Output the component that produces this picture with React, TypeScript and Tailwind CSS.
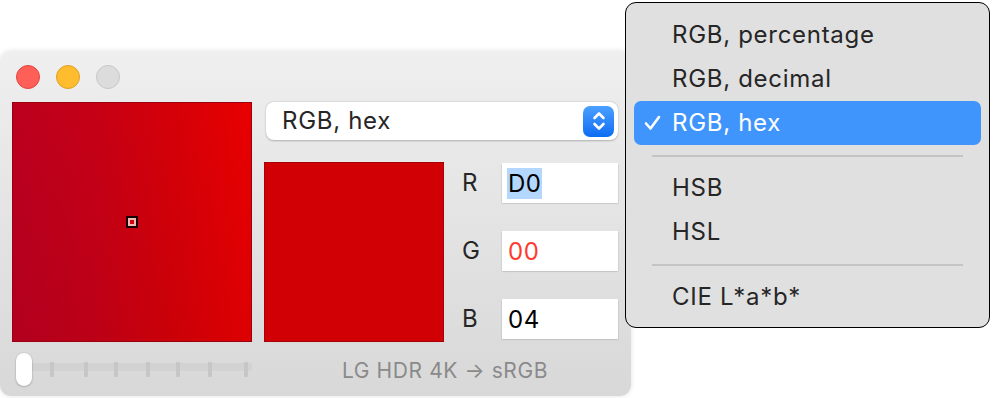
import React from "react";

const menuItems = [
  { label: "RGB, percentage" },
  { label: "RGB, decimal" },
  { label: "RGB, hex", selected: true },
  { sep: true },
  { label: "HSB" },
  { label: "HSL" },
  { sep: true },
  { label: "CIE L*a*b*" },
];

const channels = [
  { name: "R", value: "D0", selected: true },
  { name: "G", value: "00", red: true },
  { name: "B", value: "04" },
];

function Stepper() {
  return (
    <div className="w-[31px] h-[31px] rounded-[7px] bg-linear-to-b from-[#4aa0ff] to-[#0b6cf2] flex items-center justify-center">
      <svg width="16" height="22" viewBox="0 0 16 22" fill="none" stroke="white" strokeWidth="2.6" strokeLinecap="round" strokeLinejoin="round">
        <path d="M3.5 8 L8 3.5 L12.5 8" />
        <path d="M3.5 14 L8 18.5 L12.5 14" />
      </svg>
    </div>
  );
}

function Slider() {
  const ticks = [52, 86, 116, 148, 178, 210, 246];
  return (
    <div className="relative w-[236px] h-[33px]">
      <div className="absolute left-[4px] right-0 top-[10px] h-[8px] bg-[#d2d2d2] rounded-[2px]" />
      {ticks.map((x) => (
        <div key={x} className="absolute top-[9px] w-[4px] h-[15px] bg-[#c6c6c6] rounded-[1px]" style={{ left: x - 16 - 2 }} />
      ))}
      <div className="absolute left-0 top-0 w-[16px] h-[33px] rounded-full bg-white shadow-[0_0.5px_2px_rgba(0,0,0,0.35)]" />
    </div>
  );
}

export default function App() {
  return (
    <div className="relative w-[994px] h-[398px] bg-white overflow-hidden font-['Inter',sans-serif] text-[#262626]">
      {/* window */}
      <div className="absolute left-0 top-[51px] w-[631px] h-[345px] rounded-[11px] bg-linear-to-b from-[#efefef] to-[#d8d8d8] shadow-[0_0_5px_rgba(0,0,0,0.12)] flex flex-col">
        <div className="h-[51px] pt-[14px] pl-[16px] flex gap-[16px]">
          <div className="w-[24px] h-[24px] rounded-full bg-[#fe5f57] border border-[#e2463f]" />
          <div className="w-[24px] h-[24px] rounded-full bg-[#febc2e] border border-[#e0a024]" />
          <div className="w-[24px] h-[24px] rounded-full bg-[#dcdcdc] border border-[#c8c8c8]" />
        </div>
        <div className="flex pl-[12px]">
          <div className="relative w-[240px] h-[240px] border border-[#9a0010] bg-[linear-gradient(90deg,#b9001f_0%,#c40016_35%,#d20008_65%,#e70000_100%)]">
            <div className="absolute inset-0 bg-linear-to-b from-[rgba(255,0,0,0.04)] to-[rgba(60,0,20,0.06)]" />
            <div className="absolute left-[113px] top-[113px] w-[12px] h-[12px] bg-[#1a0000] p-[2px]">
              <div className="w-full h-full bg-[#f2b8b8] p-[2px]">
                <div className="w-full h-full bg-[#d40010]" />
              </div>
            </div>
          </div>
          <div className="ml-[14px] w-[352px] flex flex-col">
            <div className="h-[38px] rounded-[8px] bg-white shadow-[0_0.5px_2px_rgba(0,0,0,0.25)] flex items-center justify-between pl-[16px] pr-[4px]">
              <span className="text-[24px] tracking-[0.7px]">RGB, hex</span>
              <Stepper />
            </div>
            <div className="mt-[22px] flex -ml-[2px]">
              <div className="w-[180px] h-[180px] bg-[#d00004] border border-[#a60008]" />
              <div className="flex flex-col gap-[28px] pt-[1px]">
                {channels.map((c) => (
                  <div key={c.name} className="flex items-center h-[40px]">
                    <span className="w-[58px] pl-[18px] text-[24px]">{c.name}</span>
                    <div className="w-[116px] h-[40px] bg-white shadow-[0_0.5px_1.5px_rgba(0,0,0,0.3)] flex items-center pl-[5px]">
                      <span
                        className={
                          "text-[24px] leading-[31px] px-[1px] tracking-[0.5px] " +
                          (c.selected ? "bg-[#b3d7ff] text-black" : c.red ? "text-[#ff3b30]" : "text-black")
                        }
                      >
                        {c.value}
                      </span>
                    </div>
                  </div>
                ))}
              </div>
            </div>
          </div>
        </div>
        <div className="flex items-start pl-[16px] pt-[11px]">
          <Slider />
          <div className="ml-[16px] w-[354px] text-center text-[21px] tracking-[0.6px] text-[#8a8a8a] pt-[2px]">LG HDR 4K → sRGB</div>
        </div>
      </div>

      {/* popup menu */}
      <div className="absolute left-[625px] top-[2px] w-[365px] h-[326px] rounded-[11px] border-[1.5px] border-black bg-[#e0e0e0] px-[8px] pt-[10px]">
        {menuItems.map((m, i) =>
          m.sep ? (
            <div key={i} className="h-[21px] flex items-center px-[18px]">
              <div className="w-full h-[2px] bg-[#c4c4c4]" />
            </div>
          ) : (
            <div
              key={i}
              className={
                "h-[44px] rounded-[7px] flex items-center pl-[38px] relative text-[24px] tracking-[0.7px] " +
                (m.selected ? "bg-[#3f95fb] text-white" : "")
              }
            >
              {m.selected && (
                <svg className="absolute left-[10px] top-[14px]" width="17" height="16" viewBox="0 0 17 16" fill="none" stroke="white" strokeWidth="2.6" strokeLinecap="round" strokeLinejoin="round">
                  <path d="M2 8.5 L6.5 13.5 L15 2" />
                </svg>
              )}
              {m.label}
            </div>
          )
        )}
      </div>
    </div>
  );
}
